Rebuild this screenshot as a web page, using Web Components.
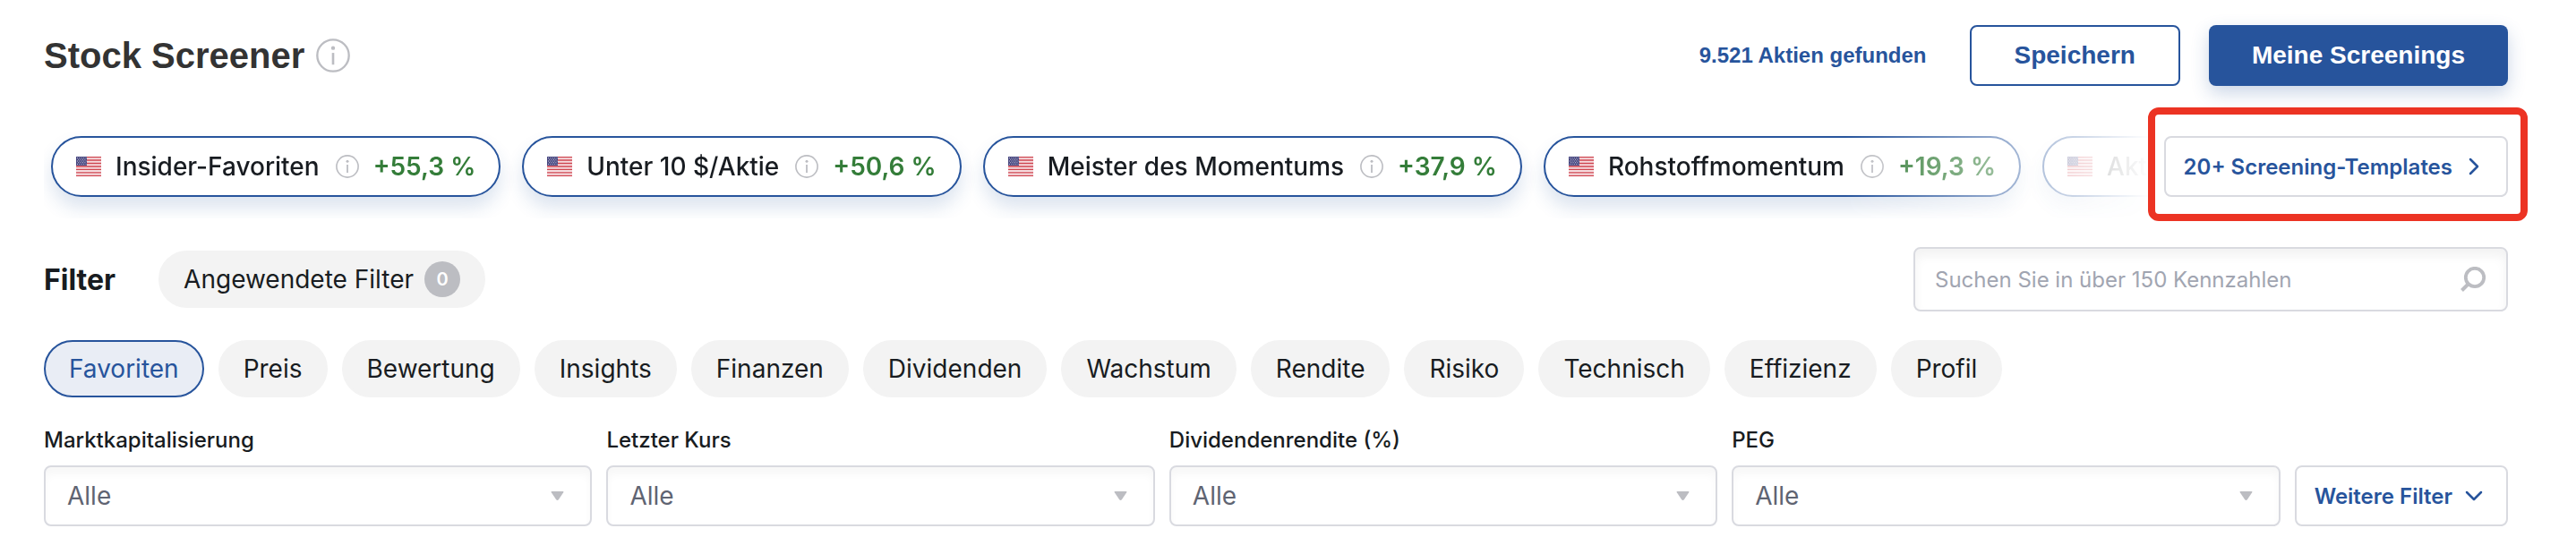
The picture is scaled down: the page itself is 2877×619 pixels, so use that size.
<!DOCTYPE html>
<html lang="de">
<head>
<meta charset="utf-8">
<meta name="viewport" content="width=device-width, initial-scale=1">
<title>Stock Screener</title>
<style>
  body {
    margin: 0;
    background: #fff;
    color: #181c21;
    font-family: Inter, "Liberation Sans", sans-serif;
    font-size: 28px;
    font-optical-sizing: none;
    --blue: #27549c;
    --line: #d9dae0;
    --grey: #bcbdc2;
    --chip: #f3f3f3;
  }
</style>
</head>
<body>
<stock-screener></stock-screener>

<template id="t-info-icon">
  <style>
    :host { display: block; flex: none; width: 26px; height: 26px; }
    svg { display: block; width: 100%; height: 100%; }
  </style>
  <svg viewBox="0 0 26 26" fill="none" aria-hidden="true">
    <circle cx="13" cy="13" r="12.1" stroke="#bcbdc2" stroke-width="1.6"/>
    <path d="M13 11v9" stroke="#bcbdc2" stroke-width="1.8"/>
    <circle cx="13" cy="7.3" r="1.5" fill="#bcbdc2"/>
  </svg>
</template>

<template id="t-us-flag">
  <style>
    :host { display: block; flex: none; width: 28px; height: 22px; }
    svg { display: block; }
  </style>
  <svg width="28" height="22" viewBox="0 0 28 22" role="img" aria-label="USA">
    <path fill="#f6dde0" d="M0 0h28v22H0z"/>
    <path stroke="#cf4650" stroke-width="1.3" d="M0 .6h28M0 4h28M0 7.5h28M0 11h28M0 14.4h28M0 17.8h28M0 21.4h28"/>
    <path fill="#46467f" d="M0 0h12v10H0z"/>
    <path stroke="#c9c9dc" stroke-width="1" stroke-dasharray="1 1.4" d="M1 1.6h10.500M2.200 3.300h9M1 5h10.500M2.200 6.700h9M1 8.400h10.500"/>
  </svg>
</template>

<template id="t-screening-pill">
  <style>
    :host { display: block; flex: none; }
    button {
      display: flex; align-items: center; box-sizing: border-box; height: 68px;
      padding: 0 26px; border: 2px solid var(--blue); border-radius: 34px;
      background: #fff; color: inherit; font: inherit; white-space: nowrap;
      box-shadow: 0 12px 20px rgba(39, 84, 156, .16);
    }
    .name { margin: 0 18px 0 16px; font-weight: 500; }
    .gain { margin-left: 16px; color: #347d39; font-weight: 600; }
  </style>
  <button type="button">
    <us-flag></us-flag>
    <span class="name"><slot></slot></span>
    <info-icon></info-icon>
    <span class="gain"><slot name="gain"></slot></span>
  </button>
</template>

<template id="t-filter-chip">
  <style>
    :host { display: block; flex: none; }
    button {
      display: flex; align-items: center; gap: 12px; box-sizing: border-box; height: 64px;
      padding: 0 26px; border: 2px solid var(--chip); border-radius: 32px;
      background: var(--chip); color: inherit; font: inherit; white-space: nowrap;
    }
    :host([selected]) button { border-color: var(--blue); background: #e9edf5; color: var(--blue); }
  </style>
  <button type="button"><slot></slot></button>
</template>

<template id="t-action-button">
  <style>
    :host { display: block; flex: none; }
    button {
      display: flex; align-items: center; box-sizing: border-box; height: 68px;
      padding: 0 48px; border: 2px solid var(--blue); border-radius: 8px;
      background: #fff; color: var(--blue); white-space: nowrap;
      font: bold 28px "Liberation Sans", Arial, sans-serif;
    }
    :host([primary]) button {
      border: 0; background: var(--blue); color: #fff;
      box-shadow: 0 8px 20px rgba(39, 84, 156, .24);
    }
  </style>
  <button type="button"><slot></slot></button>
</template>

<template id="t-outline-button">
  <style>
    :host { display: block; flex: none; }
    button {
      display: flex; align-items: center; gap: 14px; box-sizing: border-box; height: 68px;
      padding: 0 24px 0 20px; border: 2px solid var(--line); border-radius: 8px;
      background: #fff; color: var(--blue); white-space: nowrap;
      font: inherit; font-size: 24px; font-weight: 600;
    }
  </style>
  <button type="button"><slot></slot><slot name="icon"></slot></button>
</template>

<template id="t-select-field">
  <style>
    :host { display: block; flex: 1; min-width: 0; }
    label { display: block; margin-bottom: 12px; font-size: 24px; line-height: 32px; font-weight: 500; white-space: nowrap; }
    .box { display: grid; align-items: center; }
    select, svg { grid-area: 1 / 1; }
    select {
      appearance: none; box-sizing: border-box; width: 100%; height: 68px; margin: 0;
      padding: 0 24px; border: 2px solid var(--line); border-radius: 8px;
      background: #fff; color: #5f6472; font: inherit;
      box-shadow: inset 0 8px 8px rgba(0, 0, 0, .03);
    }
    svg { justify-self: end; margin-right: 31px; pointer-events: none; }
  </style>
  <label for="field"><slot></slot></label>
  <div class="box">
    <select id="field"><option>Alle</option></select>
    <svg width="15" height="10" viewBox="0 0 15 10" aria-hidden="true"><path fill="#bcbdc2" d="M1.500 0h12q1.500 0 .7 1.300L9 9q-1.500 1.800-3 0L.8 1.300Q0 0 1.500 0z"/></svg>
  </div>
</template>

<template id="t-search-field">
  <style>
    :host { display: grid; align-items: center; width: 664px; }
    input, svg { grid-area: 1 / 1; }
    input {
      box-sizing: border-box; width: 100%; height: 72px; margin: 0;
      padding: 0 80px 0 22px; border: 2px solid var(--line); border-radius: 8px;
      background: #fff; color: inherit; font: inherit; font-size: 24px;
      box-shadow: inset 0 8px 12px rgba(0, 0, 0, .05);
    }
    input::placeholder { color: #a1a5b1; opacity: 1; }
    svg { justify-self: end; margin-right: 24px; }
  </style>
  <input type="search" aria-label="Kennzahlen suchen" placeholder="Suchen Sie in über 150 Kennzahlen">
  <svg width="30" height="28" viewBox="0 0 30 28" fill="none" stroke="#bcbdc2" aria-hidden="true">
    <circle cx="17" cy="12" r="10.200" stroke-width="3.800"/><path stroke-width="4" d="M9.500 19.500 2.500 26.500"/>
  </svg>
</template>

<template id="t-stock-screener">
  <style>
    :host { display: block; padding: 28px 76px 31px 49px; }
    header, .templates, .filter-bar, .chips, .fields { display: flex; }
    header { align-items: center; }
    h1 { margin: 0 13px 0 0; color: #333; font: bold 40px "Liberation Sans", Arial, sans-serif; white-space: nowrap; }
    .title-info { width: 38px; height: 38px; }
    .count { margin: 0 48px 0 auto; color: var(--blue); font: bold 24px "Liberation Sans", Arial, sans-serif; white-space: nowrap; }
    .primary { margin-left: 32px; }

    .templates { margin-top: 32px; align-items: flex-start; }
    .strip {
      display: flex; gap: 24px; flex: 1; min-width: 0; overflow: hidden; padding: 24px 0 24px 8px;
      mask-image: linear-gradient(to right, #000 calc(100% - 340px), transparent);
    }
    .all { position: relative; margin: 24px 0 0 16px; }
    .marker {
      position: absolute; inset: -32px -22px -27px -18px;
      border: 8px solid #ec3323; border-radius: 12px; pointer-events: none;
    }

    .filter-bar { margin-top: 32px; align-items: center; }
    h2 { margin: 0 48px 0 0; font-size: 32px; font-weight: 700; }
    .badge {
      display: grid; place-items: center; width: 40px; height: 40px; border-radius: 20px;
      background: var(--grey); color: #fff; font-size: 20px; font-weight: 600;
    }
    search-field { margin-left: auto; }
    .chips { gap: 16px; margin-top: 32px; }
    .fields { gap: 16px; margin-top: 32px; align-items: flex-end; }
  </style>
  <header>
    <h1>Stock Screener</h1>
    <info-icon class="title-info"></info-icon>
    <span class="count">9.521 Aktien gefunden</span>
    <action-button>Speichern</action-button>
    <action-button class="primary" primary>Meine Screenings</action-button>
  </header>
  <section class="templates">
    <div class="strip">
      <screening-pill>Insider-Favoriten<span slot="gain">+55,3 %</span></screening-pill>
      <screening-pill>Unter 10 $/Aktie<span slot="gain">+50,6 %</span></screening-pill>
      <screening-pill>Meister des Momentums<span slot="gain">+37,9 %</span></screening-pill>
      <screening-pill>Rohstoffmomentum<span slot="gain">+19,3 %</span></screening-pill>
      <screening-pill>Akt</screening-pill>
    </div>
    <div class="all">
      <outline-button>20+ Screening-Templates
        <svg slot="icon" width="22" height="22" viewBox="0 0 22 22" fill="none" stroke="#27549c" stroke-width="2.500" stroke-linecap="round" stroke-linejoin="round" aria-hidden="true"><path d="m6 3 8 8-8 8"/></svg>
      </outline-button>
      <div class="marker"></div>
    </div>
  </section>
  <section class="filter-bar">
    <h2>Filter</h2>
    <filter-chip>Angewendete Filter <span class="badge">0</span></filter-chip>
    <search-field></search-field>
  </section>
  <nav class="chips">
    <filter-chip selected>Favoriten</filter-chip>
    <filter-chip>Preis</filter-chip>
    <filter-chip>Bewertung</filter-chip>
    <filter-chip>Insights</filter-chip>
    <filter-chip>Finanzen</filter-chip>
    <filter-chip>Dividenden</filter-chip>
    <filter-chip>Wachstum</filter-chip>
    <filter-chip>Rendite</filter-chip>
    <filter-chip>Risiko</filter-chip>
    <filter-chip>Technisch</filter-chip>
    <filter-chip>Effizienz</filter-chip>
    <filter-chip>Profil</filter-chip>
  </nav>
  <section class="fields">
    <select-field>Marktkapitalisierung</select-field>
    <select-field>Letzter Kurs</select-field>
    <select-field>Dividendenrendite (%)</select-field>
    <select-field>PEG</select-field>
    <outline-button>Weitere Filter
      <svg slot="icon" width="22" height="22" viewBox="0 0 22 22" fill="none" stroke="#27549c" stroke-width="2.500" stroke-linecap="round" stroke-linejoin="round" aria-hidden="true"><path d="m2 7 8 8 8-8"/></svg>
    </outline-button>
  </section>
</template>

<script>
  const define = (name) => {
    customElements.define(name, class extends HTMLElement {
      constructor() {
        super();
        const template = document.getElementById('t-' + name);
        this.attachShadow({ mode: 'open' }).append(template.content.cloneNode(true));
      }
    });
  };
  ['info-icon', 'us-flag', 'screening-pill', 'filter-chip', 'action-button',
   'outline-button', 'select-field', 'search-field', 'stock-screener'].forEach(define);
</script>
</body>
</html>
